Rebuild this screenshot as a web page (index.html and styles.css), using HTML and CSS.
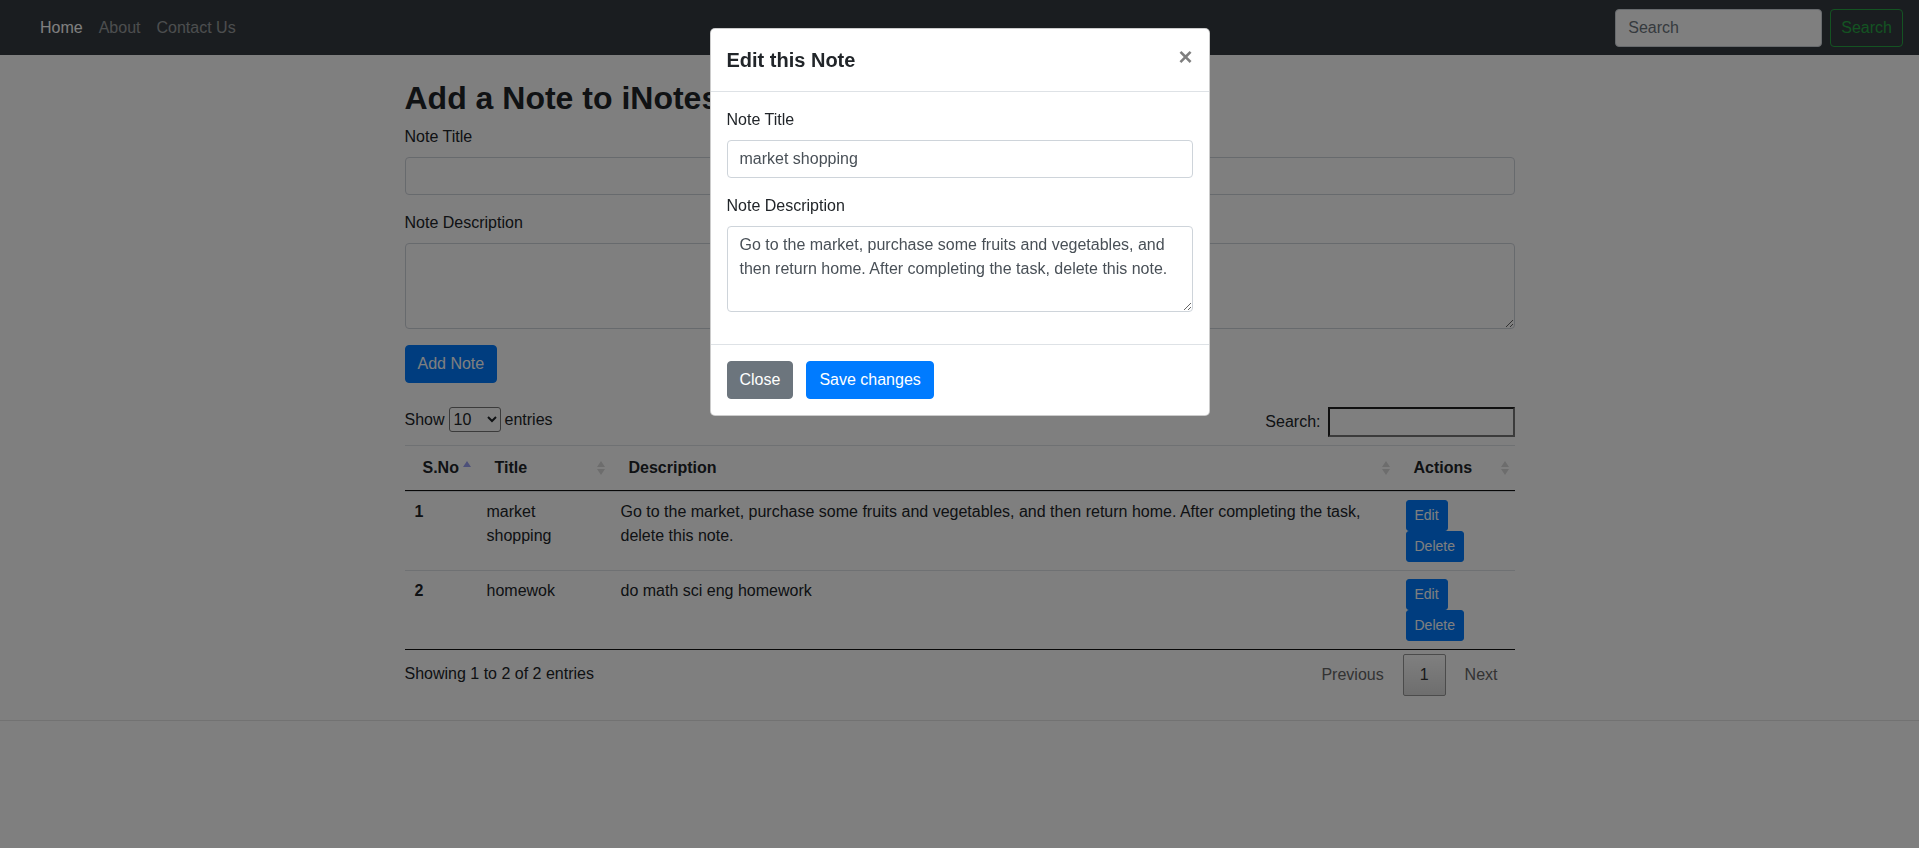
FILE: index.html
```html
<!DOCTYPE html>
<html lang="en">
<head>
<meta charset="utf-8">
<title>iNotes</title>
<link rel="stylesheet" href="styles.css">
</head>
<body>
<nav class="navbar">
  <ul class="nav-links">
    <li><a class="nav-link active" href="#">Home</a></li>
    <li><a class="nav-link" href="#">About</a></li>
    <li><a class="nav-link" href="#">Contact Us</a></li>
  </ul>
  <form class="nav-search">
    <input class="nav-search-input" type="search" placeholder="Search">
    <button class="btn btn-outline-success" type="button">Search</button>
  </form>
</nav>

<main class="page">
  <section class="note-form">
    <h2 class="page-title">Add a Note to iNotes</h2>
    <div class="form-group">
      <label class="form-label">Note Title</label>
      <input class="form-control" type="text">
    </div>
    <div class="form-group">
      <label class="form-label">Note Description</label>
      <textarea class="form-control form-textarea" rows="3"></textarea>
    </div>
    <button class="btn btn-primary" type="button">Add Note</button>
  </section>

  <section class="notes">
    <div class="table-tools">
      <label class="length">Show <select class="length-select"><option>10</option><option>25</option><option>50</option><option>100</option></select> entries</label>
      <label class="filter">Search:<input class="filter-input" type="search"></label>
    </div>
    <table class="notes-table">
      <colgroup>
        <col class="col-sno">
        <col class="col-title">
        <col class="col-desc">
        <col class="col-actions">
      </colgroup>
      <thead>
        <tr>
          <th>S.No<svg class="sort-icon" width="8" height="14" viewBox="0 0 8 14"><path d="M4 0 L8 6 H0 Z" fill="#9ba1f2"/></svg></th>
          <th>Title<svg class="sort-icon" width="8" height="14" viewBox="0 0 8 14"><path d="M4 0 L8 6 H0 Z M0 8 H8 L4 14 Z" fill="#dadada"/></svg></th>
          <th>Description<svg class="sort-icon" width="8" height="14" viewBox="0 0 8 14"><path d="M4 0 L8 6 H0 Z M0 8 H8 L4 14 Z" fill="#dadada"/></svg></th>
          <th>Actions<svg class="sort-icon" width="8" height="14" viewBox="0 0 8 14"><path d="M4 0 L8 6 H0 Z M0 8 H8 L4 14 Z" fill="#dadada"/></svg></th>
        </tr>
      </thead>
      <tbody>
        <tr>
          <th>1</th>
          <td>market shopping</td>
          <td>Go to the market, purchase some fruits and vegetables, and then return home. After completing the task, delete this note.</td>
          <td><div class="row-actions"><button class="btn btn-sm btn-primary" type="button">Edit</button><button class="btn btn-sm btn-primary" type="button">Delete</button></div></td>
        </tr>
        <tr>
          <th>2</th>
          <td>homewok</td>
          <td>do math sci eng homework</td>
          <td><div class="row-actions"><button class="btn btn-sm btn-primary" type="button">Edit</button><button class="btn btn-sm btn-primary" type="button">Delete</button></div></td>
        </tr>
      </tbody>
    </table>
    <div class="table-foot">
      <div class="table-info">Showing 1 to 2 of 2 entries</div>
      <div class="paginate">
        <a class="page-btn disabled">Previous</a>
        <a class="page-btn current">1</a>
        <a class="page-btn disabled">Next</a>
      </div>
    </div>
  </section>
</main>
<hr class="page-rule">

<div class="backdrop"></div>
<div class="modal">
  <div class="modal-dialog">
    <div class="modal-header">
      <h5 class="modal-title">Edit this Note</h5>
      <button class="close" type="button">&times;</button>
    </div>
    <div class="modal-body">
      <div class="form-group">
        <label class="form-label">Note Title</label>
        <input class="form-control" type="text" value="market shopping">
      </div>
      <div class="form-group">
        <label class="form-label">Note Description</label>
        <textarea class="form-control form-textarea" rows="3">Go to the market, purchase some fruits and vegetables, and then return home. After completing the task, delete this note.</textarea>
      </div>
    </div>
    <div class="modal-footer">
      <button class="btn btn-secondary" type="button">Close</button>
      <button class="btn btn-primary" type="button">Save changes</button>
    </div>
  </div>
</div>
</body>
</html>
```
FILE: styles.css
```css
* { box-sizing: border-box; }

html, body { margin: 0; }

body {
  font-family: "Liberation Sans", Arial, sans-serif;
  font-size: 16px;
  line-height: 1.5;
  color: #212529;
  background: #fff;
}

/* ---------- navbar ---------- */
.navbar {
  display: flex;
  align-items: center;
  justify-content: space-between;
  height: 55px;
  padding: 0 16px 0 32px;
  background: #343a40;
}

.nav-links {
  display: flex;
  list-style: none;
  margin: 0;
  padding: 0;
}

.nav-link {
  display: block;
  padding: 8px;
  color: rgba(255, 255, 255, 0.5);
  text-decoration: none;
}

.nav-link.active { color: #fff; }

.nav-search {
  display: flex;
  align-items: center;
  gap: 8px;
  margin: 0;
}

.nav-search-input {
  width: 207px;
  height: 38px;
  padding: 6px 12px;
  font: inherit;
  color: #495057;
  background: #fff;
  border: 1px solid #ced4da;
  border-radius: 4px;
}

.nav-search-input::placeholder { color: #6c757d; }

/* ---------- buttons ---------- */
.btn {
  display: inline-block;
  font: inherit;
  font-size: 16px;
  line-height: 24px;
  padding: 6px 12px;
  border: 1px solid transparent;
  border-radius: 4px;
  cursor: pointer;
  white-space: nowrap;
}

.btn-primary { color: #fff; background: #007bff; border-color: #007bff; }
.btn-secondary { color: #fff; background: #6c757d; border-color: #6c757d; }
.btn-outline-success { color: #28a745; background: transparent; border-color: #28a745; padding: 6px 10px; }

.btn-sm {
  font-size: 14px;
  line-height: 21px;
  padding: 4px 8px;
  border-radius: 3px;
}

/* ---------- page ---------- */
.page {
  width: 1110px;
  margin: 24px auto;
  display: flex;
  flex-direction: column;
  gap: 24px;
}

.page-title {
  margin: 0 0 8px;
  font-size: 32px;
  font-weight: 700;
  line-height: 1.2;
}

.form-group { margin-bottom: 16px; }

.form-label {
  display: block;
  margin-bottom: 8px;
}

.form-control {
  display: block;
  width: 100%;
  height: 38px;
  padding: 6px 12px;
  font: inherit;
  color: #495057;
  background: #fff;
  border: 1px solid #ced4da;
  border-radius: 4px;
}

.form-textarea {
  height: 86px;
  resize: both;
}

/* ---------- table tools ---------- */
.table-tools {
  display: flex;
  justify-content: space-between;
  align-items: flex-start;
  height: 38px;
}

.length, .filter {
  display: flex;
  align-items: center;
  gap: 4px;
}

.filter { gap: 7px; }

.length-select {
  width: 52px;
  height: 25px;
  font: inherit;
  font-size: 16px;
  color: #212529;
  background: #fff;
  border: 1px solid #767676;
  border-radius: 3px;
}

.filter-input {
  width: 187px;
  height: 30px;
  padding: 1px 2px;
  font: inherit;
  background: #fff;
  border: 2px inset #767676;
}

/* ---------- table ---------- */
.notes-table {
  width: 100%;
  table-layout: fixed;
  border-collapse: separate;
  border-spacing: 0;
  border-bottom: 1px solid #111;
}

.col-sno { width: 72px; }
.col-title { width: 134px; }
.col-desc { width: 785px; }
.col-actions { width: 119px; }

.notes-table thead th {
  position: relative;
  padding: 10px 18px;
  text-align: left;
  font-weight: 700;
  vertical-align: bottom;
  border-top: 1px solid #dee2e6;
  border-bottom: 1px solid #111;
}

.sort-icon {
  position: absolute;
  right: 6px;
  top: 50%;
  margin-top: -7px;
}

.notes-table tbody th,
.notes-table tbody td {
  padding: 8px 10px;
  text-align: left;
  vertical-align: top;
  border-top: 1px solid #dee2e6;
}

.notes-table tbody th { font-weight: 700; }

.row-actions {
  display: flex;
  flex-wrap: wrap;
  column-gap: 4px;
}

/* ---------- table footer ---------- */
.table-foot {
  display: flex;
  justify-content: space-between;
  align-items: flex-start;
}

.table-info { padding-top: 12px; }

.paginate {
  display: flex;
  padding-top: 4px;
}

.page-btn {
  display: block;
  margin-left: 2px;
  padding: 8px 16px;
  min-width: 24px;
  text-align: center;
  border: 1px solid transparent;
  border-radius: 2px;
  color: #666;
}

.page-btn.current {
  color: #333;
  border-color: #979797;
  background: linear-gradient(to bottom, #fff 0%, #dcdcdc 100%);
}

.page-rule {
  margin: 0;
  border: 0;
  border-top: 1px solid rgba(0, 0, 0, 0.1);
}

/* ---------- modal ---------- */
.backdrop {
  position: fixed;
  inset: 0;
  background: #000;
  opacity: 0.5;
  z-index: 1040;
}

.modal {
  position: fixed;
  inset: 0;
  z-index: 1050;
  display: flex;
  justify-content: center;
  align-items: flex-start;
}

.modal-dialog {
  width: 500px;
  margin-top: 28px;
  background: #fff;
  border: 1px solid rgba(0, 0, 0, 0.2);
  border-radius: 5px;
}

.modal-header {
  display: flex;
  align-items: flex-start;
  justify-content: space-between;
  padding: 16px;
  border-bottom: 1px solid #dee2e6;
}

.modal-title {
  margin: 0;
  font-size: 20px;
  font-weight: 700;
  line-height: 30px;
}

.close {
  margin: -16px -16px -16px auto;
  padding: 16px;
  font: inherit;
  font-size: 24px;
  font-weight: 700;
  line-height: 1;
  color: #000;
  opacity: 0.5;
  text-shadow: 0 1px 0 #fff;
  background: transparent;
  border: 0;
}

.modal-body { padding: 16px; }

.modal-footer {
  display: flex;
  gap: 13px;
  padding: 16px;
  border-top: 1px solid #dee2e6;
}
```
